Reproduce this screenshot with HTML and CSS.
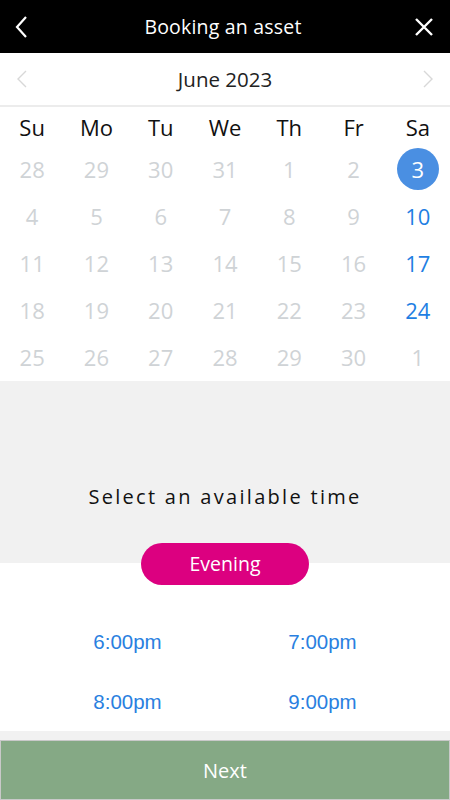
FILE: index.html
```html
<!DOCTYPE html>
<html lang="en">
<head>
  <meta charset="UTF-8">
  <meta name="viewport" content="width=device-width, initial-scale=1.0">
  <title>Booking an asset</title>
  <link rel="stylesheet" href="styles.css">
</head>
<body>

  <div class="topbar">
    <button class="icon-btn" aria-label="Back">
      <svg width="14" height="24" viewBox="0 0 14 24"><path d="M11 2 L2 12 L11 22" fill="none" stroke="#fff" stroke-width="2.2"/></svg>
    </button>
    <div class="topbar-title">Booking an asset</div>
    <button class="icon-btn" aria-label="Close">
      <svg width="20" height="20" viewBox="0 0 20 20"><path d="M2 2 L18 18 M18 2 L2 18" fill="none" stroke="#fff" stroke-width="2.4"/></svg>
    </button>
  </div>

  <div class="month-bar">
    <svg width="12" height="20" viewBox="0 0 12 20"><path d="M10 2 L2 10 L10 18" fill="none" stroke="#d8d8d8" stroke-width="1.4"/></svg>
    <div class="month-title">June 2023</div>
    <svg width="12" height="20" viewBox="0 0 12 20"><path d="M2 2 L10 10 L2 18" fill="none" stroke="#d8d8d8" stroke-width="1.4"/></svg>
  </div>

  <div class="calendar">
    <div class="weekday">Su</div>
    <div class="weekday">Mo</div>
    <div class="weekday">Tu</div>
    <div class="weekday">We</div>
    <div class="weekday">Th</div>
    <div class="weekday">Fr</div>
    <div class="weekday">Sa</div>

    <div class="day">28</div><div class="day">29</div><div class="day">30</div><div class="day">31</div>
    <div class="day">1</div><div class="day">2</div><div class="day"><span class="selected">3</span></div>

    <div class="day">4</div><div class="day">5</div><div class="day">6</div><div class="day">7</div>
    <div class="day">8</div><div class="day">9</div><div class="day open">10</div>

    <div class="day">11</div><div class="day">12</div><div class="day">13</div><div class="day">14</div>
    <div class="day">15</div><div class="day">16</div><div class="day open">17</div>

    <div class="day">18</div><div class="day">19</div><div class="day">20</div><div class="day">21</div>
    <div class="day">22</div><div class="day">23</div><div class="day open">24</div>

    <div class="day">25</div><div class="day">26</div><div class="day">27</div><div class="day">28</div>
    <div class="day">29</div><div class="day">30</div><div class="day">1</div>
  </div>

  <div class="times">
    <div class="times-title">Select an available time</div>
    <div class="period">Evening</div>
    <div class="slots">
      <a class="slot">6:00pm</a>
      <a class="slot">7:00pm</a>
      <a class="slot">8:00pm</a>
      <a class="slot">9:00pm</a>
    </div>
  </div>

  <div class="footer">
    <button class="next-btn">Next</button>
  </div>

</body>
</html>
```

FILE: styles.css
```css
body {
  margin: 0;
  padding: 0;
  width: 450px;
  height: 800px;
  overflow: hidden;
  font-family: "Open Sans", "Noto Sans", sans-serif;
  background-color: #fff;
}
.topbar {
  height: 53px;
  background-color: #000;
  display: flex;
  align-items: center;
  justify-content: space-between;
  padding: 0 14px 0 10px;
}
.icon-btn {
  background: none;
  border: none;
  padding: 0;
  width: 24px;
  height: 24px;
  display: flex;
  align-items: center;
  justify-content: center;
}
.topbar-title {
  color: #fff;
  font-size: 19.5px;
  letter-spacing: 0.2px;
}
.month-bar {
  height: 52px;
  display: flex;
  align-items: center;
  justify-content: space-between;
  padding: 0 16px;
  border-bottom: 2px solid #ececec;
}
.month-title {
  font-size: 20.5px;
  color: #222;
}
.calendar {
  display: grid;
  grid-template-columns: repeat(7, 1fr);
  grid-template-rows: 39px repeat(5, 46.8px);
  padding-bottom: 1px;
}
.weekday {
  display: flex;
  align-items: center;
  justify-content: center;
  font-size: 22px;
  color: #111;
  padding-top: 1px;
}
.day {
  display: flex;
  align-items: center;
  justify-content: center;
  font-size: 22px;
  color: #cfd3d6;
}
.day.open {
  color: #1f7fe3;
}
.selected {
  width: 42px;
  height: 42px;
  border-radius: 50%;
  background-color: #4a8fe2;
  color: #fff;
  display: flex;
  align-items: center;
  justify-content: center;
  margin-top: -1px;
}
.times {
  background: linear-gradient(to bottom, #f1f1f1 182px, #fff 182px);
  display: flex;
  flex-direction: column;
  align-items: center;
  padding-top: 102px;
}
.times-title {
  font-size: 20px;
  line-height: 28px;
  letter-spacing: 2.3px;
  color: #111;
}
.period {
  margin-top: 32px;
  width: 168px;
  height: 42px;
  border-radius: 21px;
  background-color: #dc0080;
  color: #fff;
  font-size: 19.5px;
  display: flex;
  align-items: center;
  justify-content: center;
}
.slots {
  width: 390px;
  margin-top: 28px;
  display: grid;
  grid-template-columns: 1fr 1fr;
  grid-template-rows: 58px 58px;
  row-gap: 2px;
}
.slot {
  display: flex;
  align-items: center;
  justify-content: center;
  font-family: "Liberation Sans", Arial, sans-serif;
  font-size: 20.5px;
  color: #2a7fe0;
}
.footer {
  background-color: #f1f1f1;
  padding-top: 9px;
}
.next-btn {
  display: block;
  width: 100%;
  height: 60px;
  margin: 0;
  border: 1px solid #c9c9c9;
  background-color: #85a985;
  color: #fff;
  font-family: "Open Sans", "Noto Sans", sans-serif;
  font-size: 20px;
  padding-top: 2px;
}
```
